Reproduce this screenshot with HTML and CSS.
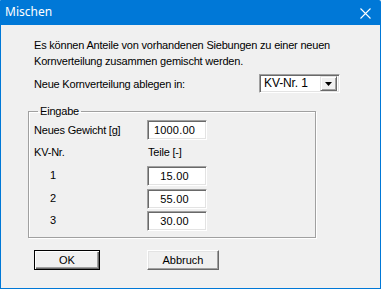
FILE: index.html
```html
<!DOCTYPE html>
<html lang="de">
<head>
<meta charset="utf-8">
<title>Mischen</title>
<link rel="stylesheet" href="styles.css">
</head>
<body>
<div class="window">
  <div class="titlebar">
    <span class="title">Mischen</span>
    <svg class="close" width="11" height="11" viewBox="0 0 11 11"><path d="M0.5 0.5 L10.5 10.5 M10.5 0.5 L0.5 10.5" stroke="#fff" stroke-width="1.1" fill="none"/></svg>
  </div>
  <div class="body">
    <p class="intro">Es können Anteile von vorhandenen Siebungen zu einer neuen<br>Kornverteilung zusammen gemischt werden.</p>
    <div class="target-row">
      <span>Neue Kornverteilung ablegen in:</span>
      <div class="combo">
        <span class="combo-value">KV-Nr. 1</span>
        <span class="combo-btn"><svg width="7" height="4" viewBox="0 0 7 4"><path d="M0 0 H7 L3.5 4 Z" fill="#000"/></svg></span>
      </div>
    </div>
    <fieldset class="group">
      <legend>Eingabe</legend>
      <div class="row row-a"><span class="label">Neues Gewicht [g]</span><span class="field">1000.00</span></div>
      <div class="row row-b"><span class="label">KV-Nr.</span><span class="col-head">Teile [-]</span></div>
      <div class="row row-c"><span class="label num">1</span><span class="field">15.00</span></div>
      <div class="row row-d"><span class="label num">2</span><span class="field">55.00</span></div>
      <div class="row row-e"><span class="label num">3</span><span class="field">30.00</span></div>
    </fieldset>
    <div class="buttons">
      <button class="btn default ok">OK</button>
      <button class="btn cancel">Abbruch</button>
    </div>
  </div>
</div>
</body>
</html>
```
FILE: styles.css
```css
html, body {
  margin: 0;
  padding: 0;
  background: #ffffff;
}

.window {
  width: 381px;
  height: 289px;
  display: flex;
  flex-direction: column;
  font-family: "Liberation Sans", Arial, sans-serif;
  font-size: 11px;
  letter-spacing: -0.2px;
  color: #000;
}

.titlebar {
  height: 25px;
  flex: none;
  background: #0078d7;
  color: #fff;
  display: flex;
  align-items: center;
  justify-content: space-between;
  padding: 0 10px 0 5px;
  border-top-left-radius: 1px;
  border-top-right-radius: 2px;
}

.title {
  font-family: "Noto Sans", "Open Sans", sans-serif;
  font-size: 12px;
  line-height: 16px;
  letter-spacing: 0;
  margin-top: -1px;
}

.close {
  display: block;
  margin-top: 1px;
}

.body {
  flex: 1;
  background: #f0f0f0;
  border: 1px solid #0078d7;
  border-top: none;
  padding-left: 27px;
}

.intro {
  margin: 12px 0 0 6px;
  line-height: 16px;
}

.target-row {
  margin-top: 5px;
  width: 312px;
  height: 19px;
  padding-left: 6px;
  box-sizing: border-box;
  display: flex;
  align-items: center;
  justify-content: space-between;
}

.combo {
  width: 81px;
  height: 19px;
  box-sizing: border-box;
  background: #fff;
  border: 1px solid;
  border-color: #a0a0a0 #fff #fff #a0a0a0;
  box-shadow: inset 1px 1px #696969, inset -1px -1px #e3e3e3;
  display: flex;
  align-items: center;
  justify-content: space-between;
  padding: 2px 2px 2px 4px;
}

.combo-value {
  line-height: 13px;
  font-size: 12px;
  letter-spacing: -0.1px;
}

.combo-btn {
  width: 17px;
  height: 15px;
  box-sizing: border-box;
  background: #f0f0f0;
  border: 1px solid;
  border-color: #e3e3e3 #696969 #696969 #e3e3e3;
  box-shadow: inset 1px 1px #fff, inset -1px -1px #a0a0a0;
  display: flex;
  align-items: center;
  justify-content: center;
}

.combo-btn svg {
  display: block;
}

.group {
  margin: 11px 0 0 0;
  width: 288px;
  box-sizing: border-box;
  min-width: 0;
  padding: 0 0 6px 0;
  border: 1px solid #a0a0a0;
  box-shadow: inset 1px 1px #fff, 1px 1px #fff;
}

.group legend {
  margin-left: 9px;
  padding: 0 2px;
  line-height: 14px;
}

.row {
  display: flex;
  align-items: center;
  height: 20px;
  padding-left: 5px;
}

.row-a { margin-top: 2px; }
.row-b { margin-top: 2px; }
.row-c { margin-top: 4px; }
.row-d { margin-top: 3px; }
.row-e { margin-top: 2px; }

.label {
  width: 113px;
  flex: none;
}

.label.num {
  padding-left: 16px;
  box-sizing: border-box;
  padding-bottom: 3px;
}

.col-head {
  padding-left: 1px;
}

.field {
  width: 60px;
  height: 20px;
  box-sizing: border-box;
  background: #fff;
  border: 1px solid;
  border-color: #a0a0a0 #fff #fff #a0a0a0;
  box-shadow: inset 1px 1px #696969, inset -1px -1px #e3e3e3;
  text-align: center;
  padding-right: 5px;
  line-height: 18px;
  font-size: 11px;
  letter-spacing: 0.2px;
}

.buttons {
  display: flex;
  margin-top: 12px;
  padding-left: 6px;
}

.btn {
  height: 20px;
  box-sizing: border-box;
  margin: 0;
  padding: 0;
  font-family: "Liberation Sans", Arial, sans-serif;
  font-size: 11px;
  color: #000;
  background: #f0f0f0;
  border: 1px solid;
  border-color: #fff #696969 #696969 #fff;
  box-shadow: inset -1px -1px #a0a0a0, inset 1px 1px #e3e3e3;
}

.btn.default {
  border: 1px solid #000;
  box-shadow: inset 1px 1px #fff, inset -1px -1px #696969, inset -2px -2px #a0a0a0;
}

.ok {
  width: 66px;
}

.cancel {
  width: 72px;
  margin-left: 47px;
}
```
